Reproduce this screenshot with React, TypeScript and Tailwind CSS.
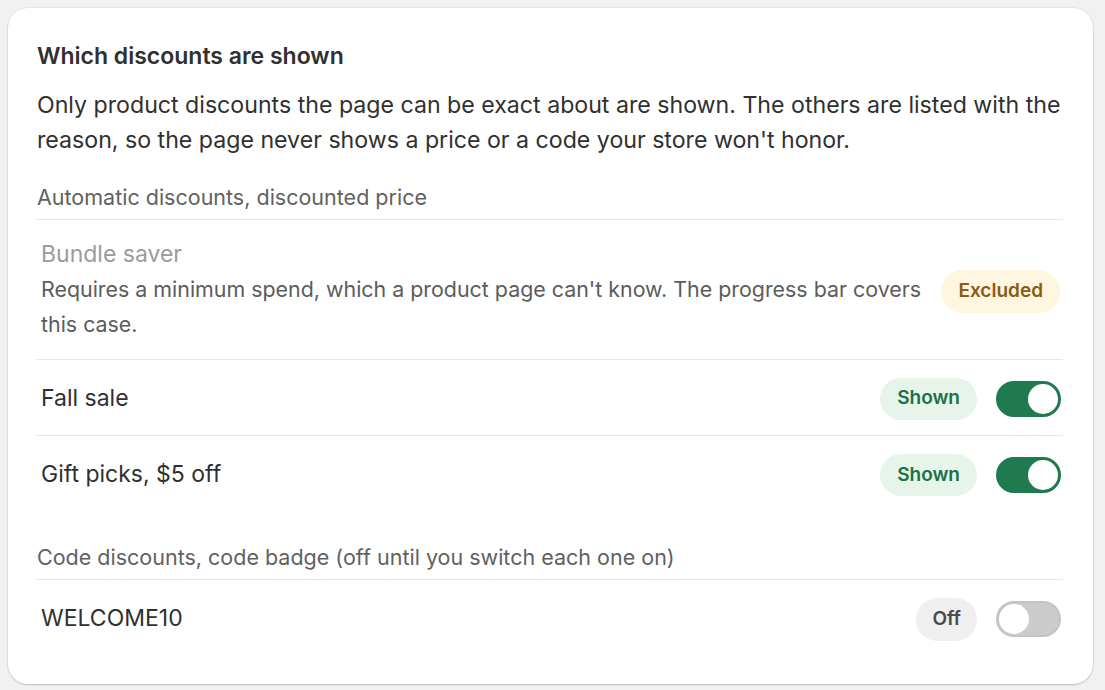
import React, { useState } from 'react';

type Status = 'shown' | 'excluded' | 'off';

interface Discount {
  id: string;
  title: string;
  note?: string;
  status: Status;
  toggle?: boolean;
}

const automatic: Discount[] = [
  {
    id: 'bundle',
    title: 'Bundle saver',
    note: "Requires a minimum spend, which a product page can't know. The progress bar covers this case.",
    status: 'excluded',
  },
  { id: 'fall', title: 'Fall sale', status: 'shown', toggle: true },
  { id: 'gift', title: 'Gift picks, $5 off', status: 'shown', toggle: true },
];

const codes: Discount[] = [{ id: 'welcome', title: 'WELCOME10', status: 'off', toggle: false }];

const Badge: React.FC<{ status: Status }> = ({ status }) => {
  if (status === 'excluded') {
    return (
      <span className="shrink-0 h-[43px] px-[17px] flex items-center rounded-full bg-[#fff6df] text-[#8a5b14] text-[19px] font-semibold">
        Excluded
      </span>
    );
  }
  if (status === 'shown') {
    return (
      <span className="shrink-0 h-[42px] px-[17px] flex items-center rounded-full bg-[#e6f4ea] text-[#1c7048] text-[19px] font-semibold">
        Shown
      </span>
    );
  }
  return (
    <span className="shrink-0 h-[43px] px-[16px] flex items-center rounded-full bg-[#efefef] text-[#4a4a4a] text-[19px] font-semibold">
      Off
    </span>
  );
};

const Toggle: React.FC<{ on: boolean; onChange: () => void }> = ({ on, onChange }) => (
  <button
    onClick={onChange}
    className={
      on
        ? 'shrink-0 w-[65px] h-[36px] rounded-full bg-[#1f7a50] border-[2px] border-[#1f7a50] flex items-center justify-end px-[1px]'
        : 'shrink-0 w-[65px] h-[36px] rounded-full bg-[#cccccc] border-[2px] border-[#c4c4c4] flex items-center justify-start px-[1px]'
    }
  >
    <span className="block w-[30px] h-[30px] rounded-full bg-white" />
  </button>
);

const Row: React.FC<{ item: Discount; last?: boolean }> = ({ item, last }) => {
  const [on, setOn] = useState(!!item.toggle);
  const status: Status = item.toggle === undefined ? item.status : on ? 'shown' : 'off';

  if (item.note) {
    return (
      <div className={`flex items-center gap-[20px] pl-[4px] pr-[3px] pt-[20px] pb-[17px] ${last ? '' : 'border-b border-[#e6e6e6]'}`}>
        <div className="flex-1 min-w-0">
          <div className="text-[23px] leading-[28px] text-[#9b9b9b]">{item.title}</div>
          <p className="text-[21.4px] leading-[35px] text-[#5c5c5c] mt-[4px]">{item.note}</p>
        </div>
        <Badge status={status} />
      </div>
    );
  }

  return (
    <div className={`flex items-center pl-[4px] pr-[2px] h-[76px] ${last ? '' : 'border-b border-[#e6e6e6]'}`}>
      <span className="flex-1 text-[23px] leading-[28px] text-[#303030]">{item.title}</span>
      <div className="flex items-center gap-[19px] pt-[2px]">
        <Badge status={status} />
        <Toggle on={on} onChange={() => setOn(!on)} />
      </div>
    </div>
  );
};

export default function App() {
  return (
    <div
      className="min-h-screen bg-[#f1f1f1] pl-[8px] pr-[12px] pt-[8px] pb-[5px]"
      style={{ fontFamily: 'Inter, "Noto Sans", sans-serif' }}
    >
      <div className="bg-white rounded-[20px] shadow-[0_1px_2px_rgba(0,0,0,0.18),0_0_0_1px_rgba(0,0,0,0.04)] pl-[29px] pr-[29px] pt-[34px] pb-[28px] text-[#303030]">
        <h2 className="text-[23px] leading-[28px] font-semibold text-[#303030]">Which discounts are shown</h2>
        <div className="pr-[1px]">
          <p className="mt-[18px] text-[23.15px] leading-[35px] text-[#303030]">
            Only product discounts the page can be exact about are shown. The others are listed with the reason, so the
            page never shows a price or a code your store won't honor.
          </p>

          <div className="mt-[25px] pb-[8px] border-b border-[#e6e6e6] text-[21.5px] leading-[28px] text-[#616161]">
            Automatic discounts, discounted price
          </div>
          {automatic.map((d, i) => (
            <Row key={d.id} item={d} last={i === automatic.length - 1} />
          ))}

          <div className="mt-[31px] pb-[8px] border-b border-[#e6e6e6] text-[21.5px] leading-[28px] text-[#616161]">
            Code discounts, code badge (off until you switch each one on)
          </div>
          {codes.map((d, i) => (
            <Row key={d.id} item={d} last={i === codes.length - 1} />
          ))}
        </div>
      </div>
    </div>
  );
}
